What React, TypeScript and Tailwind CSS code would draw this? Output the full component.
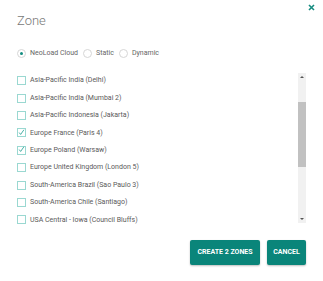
import React from 'react';

const zones = [
  { name: 'Asia-Pacific India (Delhi)', checked: false },
  { name: 'Asia-Pacific India (Mumbai 2)', checked: false },
  { name: 'Asia-Pacific Indonesia (Jakarta)', checked: false },
  { name: 'Europe France (Paris 4)', checked: true },
  { name: 'Europe Poland (Warsaw)', checked: true },
  { name: 'Europe United Kingdom (London 5)', checked: false },
  { name: 'South-America Brazil (Sao Paulo 3)', checked: false },
  { name: 'South-America Chile (Santiago)', checked: false },
  { name: 'USA Central - Iowa (Council Bluffs)', checked: false },
];

function Radio({ label, selected }: { label: string; selected?: boolean }) {
  return (
    <label className="flex items-center gap-[4px]">
      <span className="w-[9px] h-[9px] rounded-full border border-[#d6d6d6] flex items-center justify-center">
        {selected && <span className="w-[3px] h-[3px] rounded-full bg-[#138d80]" />}
      </span>
      <span>{label}</span>
    </label>
  );
}

function Checkbox({ checked }: { checked: boolean }) {
  return (
    <span className="w-[9px] h-[9px] border border-[#9ad8d1] flex items-center justify-center shrink-0">
      {checked && (
        <svg width="9" height="9" viewBox="0 0 9 9" className="-mt-[1px]">
          <path d="M1.5 4.6 L3.4 7 L7.6 1" fill="none" stroke="#2aa396" strokeWidth="1.1" />
        </svg>
      )}
    </span>
  );
}

export default function App() {
  return (
    <div className="w-[323px] h-[281px] bg-white relative font-['Roboto',sans-serif] px-[17px]">
      <button className="absolute right-[8px] top-[4px] w-[7px] h-[7px]">
        <svg width="7" height="7" viewBox="0 0 7 7">
          <path d="M1 1 L6 6 M6 1 L1 6" stroke="#168c80" strokeWidth="1.6" />
        </svg>
      </button>

      <h1 className="pt-[13px] text-[13px] leading-[16px] font-light text-[#777]">Zone</h1>

      <div className="mt-[18px] flex items-center gap-[5px] text-[7px] leading-[12px] text-[#666]">
        <Radio label="NeoLoad Cloud" selected />
        <Radio label="Static" />
        <Radio label="Dynamic" />
      </div>

      <div className="mt-[13px] flex">
        <ul className="flex-1 text-[7px] text-[#5a5a5a]">
          {zones.map((z) => (
            <li key={z.name} className="h-[17.4px] flex items-center gap-[4px]">
              <Checkbox checked={z.checked} />
              <span>{z.name}</span>
            </li>
          ))}
        </ul>
        <div className="w-[8px] mt-[1px] h-[150px] bg-[#f1f1f1] flex flex-col items-center">
          <div className="h-[8px] flex items-center justify-center">
            <span className="w-0 h-0 border-x-[2px] border-x-transparent border-b-[2px] border-b-[#555]" />
          </div>
          <div className="mt-[21px] w-full h-[65px] bg-[#c1c1c1]" />
          <div className="flex-1" />
          <div className="h-[8px] flex items-center justify-center">
            <span className="w-0 h-0 border-x-[2px] border-x-transparent border-t-[2px] border-t-[#555]" />
          </div>
        </div>
      </div>

      <div className="mt-[11px] flex justify-end gap-[7px] text-[7px] font-bold text-white">
        <button className="w-[70px] h-[25px] rounded-[2px] bg-[#0a857a] shadow-[0_1px_2px_rgba(0,0,0,0.25)]">
          CREATE 2 ZONES
        </button>
        <button className="w-[39px] h-[25px] rounded-[2px] bg-[#0a857a] shadow-[0_1px_2px_rgba(0,0,0,0.25)]">
          CANCEL
        </button>
      </div>
    </div>
  );
}
